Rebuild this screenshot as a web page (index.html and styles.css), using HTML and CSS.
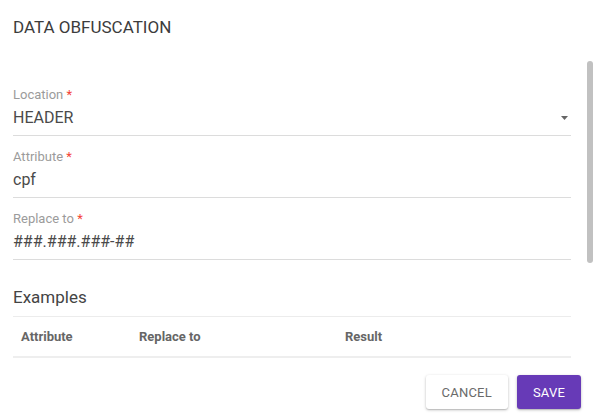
FILE: index.html
```html
<!DOCTYPE html>
<html lang="en">
<head>
<meta charset="utf-8">
<title>Data Obfuscation</title>
<link rel="stylesheet" href="styles.css">
</head>
<body>
<div class="dialog">
  <h1 class="title">DATA OBFUSCATION</h1>
  <div class="content">
    <div class="field">
      <label class="label">Location <span class="req">*</span></label>
      <div class="value select">
        <span>HEADER</span>
        <svg class="arrow" width="7" height="4" viewBox="0 0 7 4"><path d="M0 0H7L3.5 4Z" fill="#666"/></svg>
      </div>
    </div>
    <div class="field">
      <label class="label">Attribute <span class="req">*</span></label>
      <div class="value">cpf</div>
    </div>
    <div class="field">
      <label class="label">Replace to <span class="req">*</span></label>
      <div class="value">###.###.###-##</div>
    </div>
    <h2 class="subtitle">Examples</h2>
    <div class="table">
      <div class="th">Attribute</div>
      <div class="th">Replace to</div>
      <div class="th">Result</div>
    </div>
  </div>
  <div class="actions">
    <button class="btn btn-cancel">CANCEL</button>
    <button class="btn btn-save">SAVE</button>
  </div>
  <div class="scroll-thumb"></div>
</div>
</body>
</html>
```
FILE: styles.css
```css
html, body {
  margin: 0;
  padding: 0;
  background: #fff;
}
body {
  font-family: Roboto, "Liberation Sans", sans-serif;
  width: 593px;
  height: 419px;
  overflow: hidden;
}
.dialog {
  position: relative;
  height: 419px;
  box-sizing: border-box;
}
.title {
  margin: 0;
  padding: 15px 13px 0;
  font-size: 17px;
  line-height: 24px;
  font-weight: 400;
  color: #3c3c3c;
}
.content {
  padding: 47px 22px 0 13px;
}
.field {
  border-bottom: 1px solid #dcdcdc;
  padding-top: 1px;
  padding-bottom: 5px;
  margin-bottom: 12px;
}
.label {
  display: block;
  font-size: 13px;
  line-height: 16px;
  color: #9b9b9b;
}
.req {
  color: #f44336;
}
.value {
  margin-top: 3px;
  font-size: 16px;
  line-height: 24px;
  color: #4a4a4a;
}
.select {
  display: flex;
  justify-content: space-between;
  align-items: center;
}
.arrow {
  margin-right: 3px;
}
.subtitle {
  margin: 25px 0 0;
  font-size: 17px;
  line-height: 24px;
  font-weight: 400;
  color: #444;
  padding-bottom: 7px;
  border-bottom: 1px solid #ececec;
}
.table {
  display: grid;
  grid-template-columns: 118px 206px 1fr;
  height: 39px;
  align-items: center;
  border-bottom: 2px solid #eeeeee;
}
.th {
  padding-left: 8px;
  font-size: 13px;
  font-weight: 700;
  color: #666;
}
.actions {
  display: flex;
  justify-content: flex-end;
  gap: 9px;
  padding: 17px 12px 0 0;
}
.btn {
  font-family: inherit;
  font-size: 13px;
  height: 34px;
  min-width: 64px;
  padding: 0 16px;
  border: none;
  border-radius: 3px;
  box-shadow: 0 1px 3px rgba(0,0,0,0.25), 0 1px 1px rgba(0,0,0,0.1);
  letter-spacing: 0.2px;
}
.btn-cancel {
  background: #fff;
  color: #6a6a6a;
}
.btn-save {
  background: #673ab7;
  color: #fff;
}
.scroll-thumb {
  position: absolute;
  left: 587px;
  top: 61px;
  width: 6px;
  height: 202px;
  background: #c1c1c1;
  border-radius: 3px;
}
```
